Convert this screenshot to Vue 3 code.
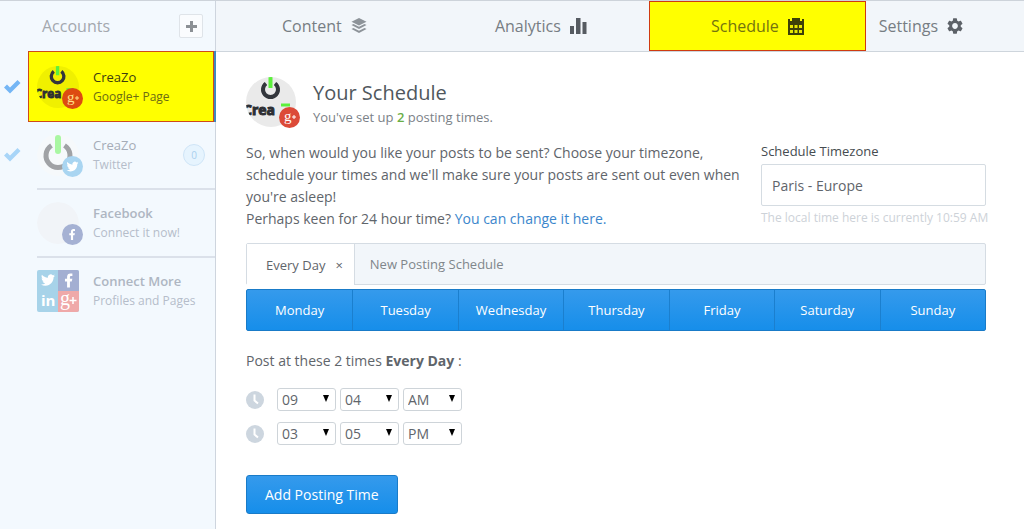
<script setup>
import { ref } from 'vue'

const days = ['Monday', 'Tuesday', 'Wednesday', 'Thursday', 'Friday', 'Saturday', 'Sunday']
const timezone = ref('Paris - Europe')
const pad = (n) => String(n).padStart(2, '0')
const hours = Array.from({ length: 12 }, (_, i) => pad(i + 1))
const minutes = Array.from({ length: 60 }, (_, i) => pad(i))
const times = ref([
  { hour: '09', minute: '04', period: 'AM' },
  { hour: '03', minute: '05', period: 'PM' }
])
const fields = [
  { key: 'hour', label: 'Hour', options: hours },
  { key: 'minute', label: 'Minute', options: minutes },
  { key: 'period', label: 'AM or PM', options: ['AM', 'PM'] }
]
const addTime = () => times.value.push({ hour: '09', minute: '00', period: 'AM' })
</script>

<template>
  <div class="app">
    <svg class="defs" width="0" height="0" aria-hidden="true">
      <symbol id="bird" viewBox="0 0 24 24">
        <path d="M23.953 4.57a10 10 0 01-2.825.775 4.958 4.958 0 002.163-2.723c-.951.555-2.005.959-3.127 1.184a4.92 4.92 0 00-8.384 4.482C7.69 8.095 4.067 6.13 1.64 3.162a4.822 4.822 0 00-.666 2.475c0 1.71.87 3.213 2.188 4.096a4.904 4.904 0 01-2.228-.616v.06a4.923 4.923 0 003.946 4.827 4.996 4.996 0 01-2.212.085 4.936 4.936 0 004.604 3.417 9.867 9.867 0 01-6.102 2.105c-.39 0-.779-.023-1.17-.067a13.995 13.995 0 007.557 2.209c9.053 0 13.998-7.496 13.998-13.985 0-.21 0-.42-.015-.63A9.935 9.935 0 0024 4.59z" />
      </symbol>
      <symbol id="fb" viewBox="0 0 24 24">
        <path d="M14 13.5h2.5l1-4H14v-2c0-1.03 0-2 2-2h1.5V2.14c-.326-.043-1.557-.14-2.857-.14C11.928 2 10 3.657 10 6.7v2.8H7v4h3V22h4v-8.5z" />
      </symbol>
      <symbol id="tick" viewBox="0 0 18 15">
        <path d="M1 8.500 4 5.500 7 8.500 14.500 1 17.500 4 7 14.500z" />
      </symbol>
      <symbol id="brand" viewBox="0 0 50 50">
        <path d="M20 6.500a7.500 7.500 0 1 0 9 0" fill="none" stroke="#33363c" stroke-width="4" />
        <path d="M24.500 0v11" stroke="#5cf03c" stroke-width="4" />
        <path d="M35 28h9" stroke="#5cf03c" stroke-width="3" />
        <text x="-3" y="38" class="brand-text">Crea</text>
      </symbol>
    </svg>

    <aside class="sidebar">
      <header class="side-head">
        <h2>Accounts</h2>
        <button class="plus" aria-label="Add account">
          <svg width="11" height="11" viewBox="0 0 11 11"><path d="M5.500 0v11M0 5.500h11" stroke="#8b9095" stroke-width="3" /></svg>
        </button>
      </header>

      <div class="row">
        <svg class="tick" width="18" height="15"><use href="#tick" /></svg>
        <a href="#" class="account active">
          <span class="avatar">
            <svg class="face yellow" width="42" height="42"><use href="#brand" /></svg>
            <svg class="badge" width="21" height="21" viewBox="0 0 21 21"><circle cx="10.500" cy="10.500" r="10.500" fill="#dd4b11" /><text x="5" y="14" class="g" fill="#ffe08a">g</text><path d="M15 8v4M13 10h4" stroke="#ffe08a" /></svg>
          </span>
          <span class="names"><strong>CreaZo</strong><span>Google+ Page</span></span>
        </a>
      </div>

      <div class="row">
        <svg class="tick pale" width="18" height="15"><use href="#tick" /></svg>
        <a href="#" class="account short">
          <span class="avatar">
            <svg class="face" width="42" height="42" viewBox="0 0 42 42"><circle cx="21" cy="21" r="21" fill="#f6f9fb" /><path d="M14.500 11.500a12 12 0 1 0 13 0" fill="none" stroke="#a0a2a5" stroke-width="5" /><path d="M21 4v13" stroke="#a9f7a2" stroke-width="6" stroke-linecap="round" /></svg>
            <svg class="badge" width="21" height="21" viewBox="0 0 21 21"><circle cx="10.500" cy="10.500" r="10.500" fill="#a9d5f1" /><use href="#bird" x="4.500" y="4.500" width="12" height="12" fill="#fff" /></svg>
          </span>
          <span class="names"><strong>CreaZo</strong><span>Twitter</span></span>
          <span class="count">0</span>
        </a>
      </div>

      <div class="row">
        <a href="#" class="account">
          <span class="avatar">
            <svg class="face" width="42" height="42" viewBox="0 0 42 42"><circle cx="21" cy="21" r="21" fill="#f1f4f8" /></svg>
            <svg class="badge" width="21" height="21" viewBox="0 0 21 21"><circle cx="10.500" cy="10.500" r="10.500" fill="#a5b1d3" /><use href="#fb" x="3.500" y="4" width="13" height="13" fill="#fff" /></svg>
          </span>
          <span class="names"><strong>Facebook</strong><span>Connect it now!</span></span>
        </a>
      </div>

      <div class="row">
        <a href="#" class="account">
          <svg class="avatar" width="42" height="42" viewBox="0 0 42 42">
            <rect width="42" height="42" rx="2" fill="#a7d3e9" />
            <path d="M21 0h19a2 2 0 0 1 2 2v19H21z" fill="#a3afd2" />
            <path d="M21 21h21v19a2 2 0 0 1-2 2H21z" fill="#efa9a9" />
            <use href="#bird" x="4" y="3" width="14" height="14" fill="#fff" />
            <use href="#fb" x="23" y="2" width="17" height="17" fill="#fff" />
            <text x="4" y="36" class="in">in</text>
            <text x="23" y="35" class="g big" fill="#fff">g</text>
            <path d="M36 27v7M32.500 30.500h7" stroke="#fff" stroke-width="1.500" />
          </svg>
          <span class="names"><strong>Connect More</strong><span>Profiles and Pages</span></span>
        </a>
      </div>
    </aside>

    <div class="main">
      <nav class="nav">
        <a href="#">Content
          <svg width="16" height="16" viewBox="0 0 16 16" fill="#8d9399"><path d="M8 0 15.500 3.700 8 7.400.500 3.700z" /><path d="M.500 7 2.500 6 8 8.800 13.500 6l2 1L8 11z" /><path d="m.500 11 2-1L8 12.800 13.500 10l2 1L8 15z" /></svg>
        </a>
        <a href="#">Analytics
          <svg width="17" height="16" viewBox="0 0 17 16" fill="#565b61"><path d="M0 8h4v8H0zM6 0h4.500v16H6zM12.500 4h4v12h-4z" /></svg>
        </a>
        <a href="#" class="current">Schedule
          <svg width="16" height="17" viewBox="0 0 16 17"><path d="M0 1h2v2h2V0h8v3h2V1h2v16H0z" fill="#3d4008" /><path d="M2 7h3v3H2zm4.500 0h3v3h-3zM11 7h3v3h-3zM2 12h3v3H2zm4.500 0h3v3h-3zM11 12h3v3h-3z" fill="#e8e800" /></svg>
        </a>
        <a href="#" class="settings">Settings
          <svg width="16" height="16" viewBox="2 2 20 20" fill="#5d6268"><path d="M19.140 12.940c.040-.300.060-.610.060-.940 0-.320-.020-.640-.070-.940l2.030-1.580a.490.490 0 0 0 .120-.610l-1.920-3.320a.488.488 0 0 0-.590-.220l-2.390.960c-.500-.380-1.030-.700-1.620-.940l-.360-2.540a.484.484 0 0 0-.480-.410h-3.840c-.240 0-.430.170-.470.410l-.360 2.540c-.590.240-1.130.570-1.620.940l-2.390-.960c-.220-.080-.470 0-.590.220L2.740 8.870c-.120.210-.080.470.120.610l2.030 1.580c-.050.300-.090.630-.090.940s.020.640.070.940l-2.030 1.580a.490.490 0 0 0-.120.610l1.920 3.320c.120.220.370.290.590.220l2.390-.960c.500.380 1.030.700 1.620.940l.360 2.540c.050.240.240.410.480.410h3.840c.240 0 .440-.170.470-.410l.360-2.540c.590-.240 1.130-.560 1.620-.940l2.390.960c.220.080.470 0 .590-.220l1.920-3.320c.120-.220.070-.470-.120-.610l-2.010-1.580zM12 15.600c-1.980 0-3.600-1.620-3.600-3.600s1.620-3.600 3.600-3.600 3.600 1.620 3.600 3.600-1.620 3.600-3.600 3.600z" /></svg>
        </a>
      </nav>

      <main class="content">
        <header class="profile">
          <span class="avatar large">
            <svg class="face grey" width="50" height="50"><use href="#brand" /></svg>
            <svg class="badge" width="21" height="21" viewBox="0 0 21 21"><circle cx="10.500" cy="10.500" r="10.500" fill="#dc4a38" /><text x="5" y="14" class="g" fill="#fff">g</text><path d="M15 8v4M13 10h4" stroke="#fff" /></svg>
          </span>
          <div>
            <h1>Your Schedule</h1>
            <p>You've set up <b>2</b> posting times.</p>
          </div>
        </header>

        <section class="intro">
          <p>So, when would you like your posts to be sent? Choose your timezone, schedule your times and we'll make sure your posts are sent out even when you're asleep!<br>Perhaps keen for 24 hour time? <a href="#">You can change it here.</a></p>
          <div class="zone">
            <label for="timezone">Schedule Timezone</label>
            <input id="timezone" v-model="timezone" type="text">
            <small>The local time here is currently 10:59 AM</small>
          </div>
        </section>

        <div class="tabs">
          <div class="tab">
            <button>Every Day</button>
            <button class="close" aria-label="Remove Every Day">×</button>
          </div>
          <button class="new">New Posting Schedule</button>
        </div>

        <div class="days">
          <button v-for="day in days" :key="day">{{ day }}</button>
        </div>

        <p class="summary">Post at these 2 times <b>Every Day</b> :</p>

        <div class="times">
          <div v-for="(time, i) in times" :key="i" class="time">
            <svg width="18" height="18" viewBox="0 0 18 18"><circle cx="9" cy="9" r="9" fill="#cdd6df" /><path d="M8.500 3.500v6l3.500 3" fill="none" stroke="#fff" stroke-width="2" /></svg>
            <span v-for="field in fields" :key="field.key" class="pick">
              <select v-model="time[field.key]" :aria-label="field.label">
                <option v-for="option in field.options" :key="option">{{ option }}</option>
              </select>
              <svg width="6" height="7" viewBox="0 0 6 7"><path d="M0 0h6L3 7z" /></svg>
            </span>
          </div>
        </div>

        <button class="add" @click="addTime">Add Posting Time</button>
      </main>
    </div>
  </div>
</template>

<style>
body {
  margin: 0;
  background: #fff;
}
</style>

<style scoped>
.app {
  display: flex;
  min-height: 100vh;
  box-sizing: border-box;
  border-top: 1px solid #cdd3da;
  font-family: "Open Sans", "Noto Sans", sans-serif;
  font-size: 14px;
  color: #5f656b;
}
.app *, .app *::before, .app *::after { box-sizing: border-box; }
.defs { position: absolute; }
h1, h2, p { margin: 0; font-weight: 400; }
a { text-decoration: none; color: inherit; }
button, input, select { font: inherit; color: inherit; margin: 0; }
button { padding: 0; border: 0; background: none; cursor: pointer; }

.sidebar {
  flex: 0 0 216px;
  background: #f3f9fe;
  border-right: 1px solid #ced5de;
}
.side-head {
  display: flex;
  align-items: center;
  justify-content: space-between;
  height: 50px;
  padding: 0 12px 0 42px;
}
.side-head h2 { font-size: 16px; color: #a3a8ae; }
.plus {
  display: grid;
  place-items: center;
  width: 24px;
  height: 24px;
  border: 1px solid #dfe4e9;
  border-radius: 2px;
  background: #fafcfe;
}
.row {
  position: relative;
  display: flex;
  justify-content: flex-end;
}
.tick {
  position: absolute;
  left: 3px;
  top: 28px;
  fill: #74b6f5;
}
.tick.pale { top: 25px; fill: #a8d5f8; }
.account {
  display: flex;
  align-items: center;
  gap: 14px;
  width: 178px;
  height: 68px;
  color: #b5bdca;
}
.account.short { height: 66px; }
.row + .row + .row .account { border-top: 2px solid #dbe1ea; }
.account.active {
  width: 186px;
  height: 71px;
  margin-right: 1px;
  padding-left: 8px;
  background: #ff0;
  border: 1px solid #cf4a18;
  box-shadow: 2px 0 0 #3f87bf;
  color: #6c6c14;
}
.account strong { font-weight: 600; color: #aeb6c2; }
.account.active strong { font-weight: 400; color: #3d3d10; }
.account.short strong { font-weight: 400; color: #a5acb7; }
.names {
  display: flex;
  flex-direction: column;
  font-size: 12px;
  line-height: 19px;
}
.names strong { font-size: 13px; }
.count {
  display: grid;
  place-items: center;
  width: 22px;
  height: 22px;
  margin: 0 10px 0 auto;
  border: 1px solid #cfe5f7;
  border-radius: 50%;
  background: #e6f4fe;
  font-size: 10px;
  color: #a9d0ef;
}
.avatar {
  position: relative;
  flex: none;
  width: 42px;
  height: 42px;
}
.avatar.large { width: 50px; height: 50px; }
.face { display: block; border-radius: 50%; }
.face.yellow { background: #f0f000; }
.face.grey { background: #eaeaea; }
.badge { position: absolute; right: -4px; bottom: -1px; }
.brand-text { font: 700 14px "Open Sans", sans-serif; fill: #2c2e33; stroke: #2c2e33; stroke-width: 1px; }
.g { font: 400 15px "Liberation Serif", serif; }
.g.big { font-size: 20px; }
.in { font: 700 15px "Open Sans", sans-serif; fill: #fff; }

.main { flex: 1; min-width: 0; }
.nav {
  display: grid;
  grid-template-columns: 2fr 2fr 2fr 1fr;
  height: 51px;
  padding-right: 50px;
  background: #f2f6fa;
  border-bottom: 1px solid #ced5dc;
  font-size: 16px;
  color: #777d83;
}
.nav a {
  display: flex;
  align-items: center;
  justify-content: center;
  gap: 9px;
}
.nav .settings { justify-content: flex-start; padding-left: 13px; }
.nav .current {
  background: #ff0;
  border: 1px solid #cf3a10;
  color: #74740f;
}
.content { padding: 25px 38px 15px 30px; }
.profile { display: flex; gap: 17px; }
.profile h1 { font-size: 20px; line-height: 32px; color: #50575d; }
.profile p { font-size: 13px; line-height: 16px; color: #7b8187; }
.profile b { font-weight: 600; color: #6aae45; }
.intro {
  display: flex;
  justify-content: space-between;
  gap: 20px;
  margin-top: 15px;
}
.intro p { flex: 1; line-height: 22px; }
.intro a { color: #3b86cc; }
.zone { flex: 0 0 225px; min-width: 0; display: flex; flex-direction: column; }
.zone label { font-size: 13px; line-height: 18px; color: #464c50; }
.zone input {
  width: 100%;
  height: 42px;
  margin: 4px 0;
  padding: 0 10px;
  border: 1px solid #d5dce2;
  border-radius: 2px;
  background: #fff;
}
.zone small { font-size: 12px; line-height: 16px; color: #cdd2d8; white-space: nowrap; }
.intro { gap: 12px; }
.tabs {
  display: flex;
  height: 42px;
  margin-top: 13px;
  border: 1px solid #d5dce3;
  border-radius: 2px;
  background: #f2f6fa;
  font-size: 13px;
}
.tab {
  display: flex;
  align-items: center;
  gap: 10px;
  height: 41px;
  padding: 0 11px 0 19px;
  background: #fff;
  border-right: 1px solid #d5dce3;
}
.new { padding: 0 15px; color: #80868b; }
.days {
  display: grid;
  grid-template-columns: repeat(7, 1fr);
  height: 42px;
  margin-top: 4px;
  border: 1px solid #197bc8;
  border-radius: 2px;
  background: linear-gradient(#359aec, #168eea);
  font-size: 13px;
  color: #fff;
}
.days button + button { border-left: 1px solid #1b7fce; }
.summary { margin-top: 20px; line-height: 20px; }
.times { display: grid; gap: 11px; margin-top: 17px; }
.time { display: flex; align-items: center; gap: 4px; }
.time > svg { margin-right: 9px; }
.pick { position: relative; display: flex; }
.pick select {
  appearance: none;
  width: 59px;
  height: 23px;
  padding: 0 4px;
  border: 1px solid #ced4d9;
  border-radius: 3px;
  background: #fff;
  line-height: 20px;
}
.pick svg { position: absolute; right: 7px; top: 7px; pointer-events: none; }
.add {
  display: block;
  height: 39px;
  margin-top: 30px;
  padding: 0 18px;
  border: 1px solid #197bc8;
  border-radius: 3px;
  background: linear-gradient(#359aec, #168eea);
  color: #fff;
}
</style>
